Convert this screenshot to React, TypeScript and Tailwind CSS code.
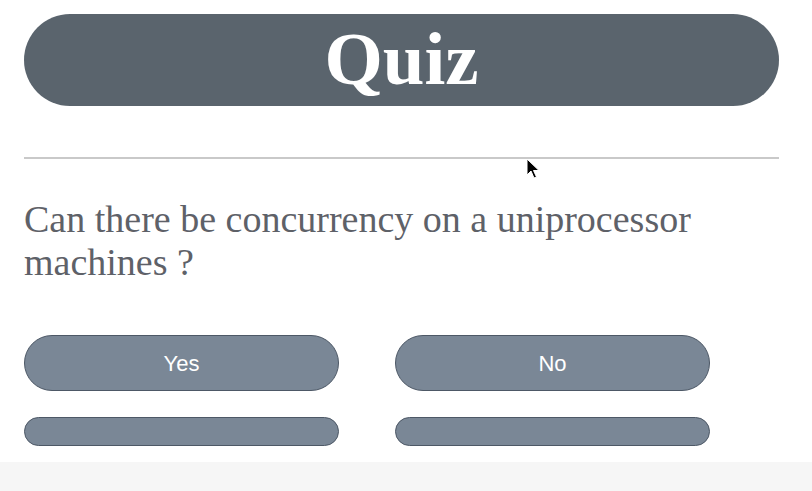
import React from "react";

const serif = { fontFamily: '"Liberation Serif", "Times New Roman", serif' };

const Cursor = () => (
  <svg
    className="absolute left-[526px] top-[158px]"
    width="14"
    height="22"
    viewBox="0 0 14 22"
  >
    <path
      d="M1 1 L1 17 L5 13 L8 20 L10.5 19 L7.5 12.5 L13 12.5 Z"
      fill="#000"
      stroke="#fff"
      strokeWidth="1"
    />
  </svg>
);

export default function App() {
  const answers = ["Yes", "No"];

  return (
    <div className="relative w-[812px] h-[491px] overflow-hidden bg-white flex flex-col">
      <div className="px-6 pt-[14px] flex-1">
        {/* Title bar */}
        <div className="w-[755px] h-[92px] rounded-[46px] bg-[#5a646d] flex items-center justify-center">
          <h1 className="text-white text-[75px] font-bold leading-none pb-1" style={serif}>
            Quiz
          </h1>
        </div>

        <hr className="mt-[51px] w-[755px] border-0 h-[2px] bg-[#c9c9c9]" />

        {/* Question */}
        <p
          className="mt-[39px] text-[38px] leading-[43px] text-[#5e6168] w-[720px]"
          style={serif}
        >
          Can there be concurrency on a uniprocessor machines ?
        </p>

        {/* Answers */}
        <div className="mt-[51px] grid grid-cols-[315px_315px] gap-x-[56px] gap-y-[26px]">
          {answers.map((a) => (
            <button
              key={a}
              className="h-[56px] rounded-full bg-[#7a8796] border border-[#4d5866] text-white text-[22px]"
              style={{ fontFamily: '"Liberation Sans", Arial, sans-serif' }}
            >
              {a}
            </button>
          ))}
          <div className="h-[29px] rounded-full bg-[#7a8796] border border-[#4d5866]" />
          <div className="h-[29px] rounded-full bg-[#7a8796] border border-[#4d5866]" />
        </div>
      </div>

      <div className="h-[29px] bg-[#f6f6f6]" />
      <Cursor />
    </div>
  );
}
